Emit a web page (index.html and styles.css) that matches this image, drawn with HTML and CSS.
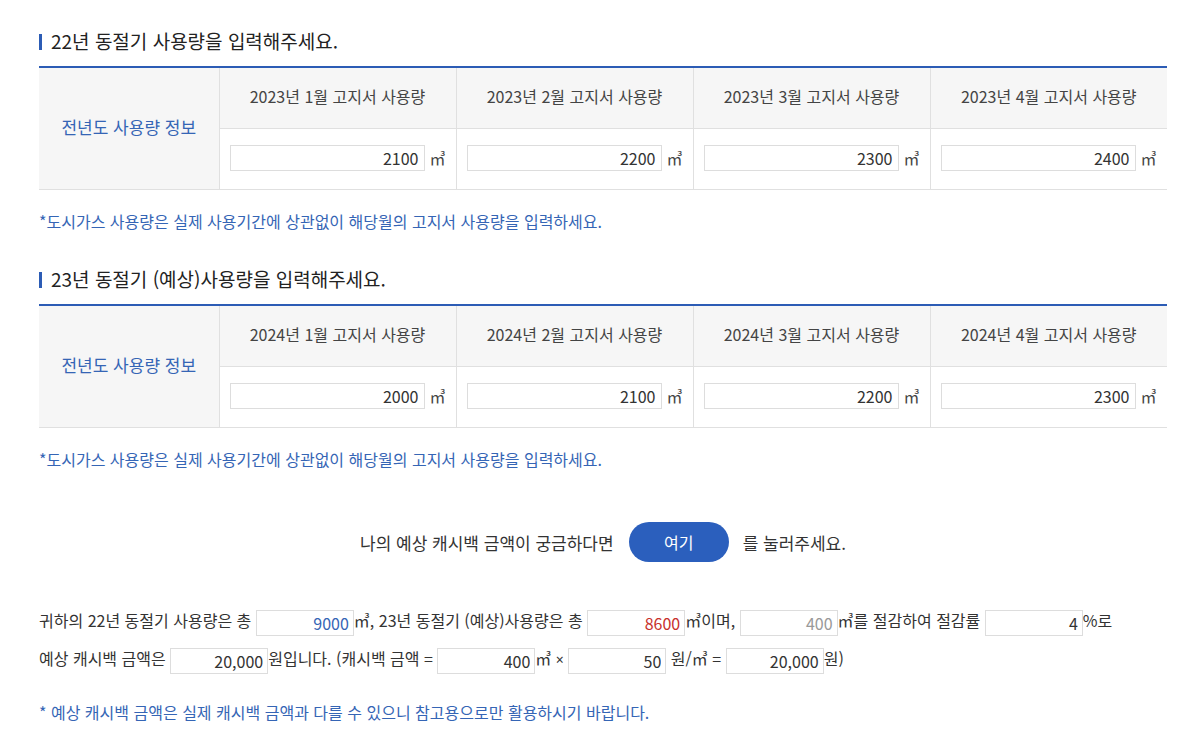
FILE: index.html
```html
<!DOCTYPE html>
<html lang="ko">

<head>
    <meta charset="UTF-8">
    <title>동절기 캐시백 계산</title>
    <link rel="stylesheet" href="styles.css">
</head>

<body>
    <div class="wrap">
        <!-- 22년 동절기 -->
        <h3 class="sub-title">22년 동절기 사용량을 입력해주세요.</h3>
        <table class="usage-table">
            <colgroup>
                <col class="col-label">
                <col><col><col><col>
            </colgroup>
            <tr>
                <th rowspan="2" class="label">전년도 사용량 정보</th>
                <th>2023년 1월 고지서 사용량</th>
                <th>2023년 2월 고지서 사용량</th>
                <th>2023년 3월 고지서 사용량</th>
                <th>2023년 4월 고지서 사용량</th>
            </tr>
            <tr>
                <td><input class="amount" type="text" value="2100"><span class="unit">㎥</span></td>
                <td><input class="amount" type="text" value="2200"><span class="unit">㎥</span></td>
                <td><input class="amount" type="text" value="2300"><span class="unit">㎥</span></td>
                <td><input class="amount" type="text" value="2400"><span class="unit">㎥</span></td>
            </tr>
        </table>
        <p class="note">*도시가스 사용량은 실제 사용기간에 상관없이 해당월의 고지서 사용량을 입력하세요.</p>

        <!-- 23년 동절기 -->
        <h3 class="sub-title">23년 동절기 (예상)사용량을 입력해주세요.</h3>
        <table class="usage-table">
            <colgroup>
                <col class="col-label">
                <col><col><col><col>
            </colgroup>
            <tr>
                <th rowspan="2" class="label">전년도 사용량 정보</th>
                <th>2024년 1월 고지서 사용량</th>
                <th>2024년 2월 고지서 사용량</th>
                <th>2024년 3월 고지서 사용량</th>
                <th>2024년 4월 고지서 사용량</th>
            </tr>
            <tr>
                <td><input class="amount" type="text" value="2000"><span class="unit">㎥</span></td>
                <td><input class="amount" type="text" value="2100"><span class="unit">㎥</span></td>
                <td><input class="amount" type="text" value="2200"><span class="unit">㎥</span></td>
                <td><input class="amount" type="text" value="2300"><span class="unit">㎥</span></td>
            </tr>
        </table>
        <p class="note">*도시가스 사용량은 실제 사용기간에 상관없이 해당월의 고지서 사용량을 입력하세요.</p>

        <div class="calc-row">
            <span>나의 예상 캐시백 금액이 궁금하다면</span>
            <button class="calc-btn" type="button">여기</button>
            <span>를 눌러주세요.</span>
        </div>

        <p class="result">
            귀하의 22년 동절기 사용량은 총 <input class="res blue" type="text" value="9000" readonly>㎥, 23년 동절기 (예상)사용량은 총 <input class="res red" type="text" value="8600" readonly>㎥이며, <input class="res gray" type="text" value="400" readonly>㎥를 절감하여 절감률 <input class="res" type="text" value="4" readonly>%로<br>
            예상 캐시백 금액은 <input class="res" type="text" value="20,000" readonly>원입니다. (캐시백 금액 = <input class="res" type="text" value="400" readonly>㎥ <span class="times">×</span> <input class="res" type="text" value="50" readonly> 원/㎥ = <input class="res" type="text" value="20,000" readonly>원)
        </p>

        <p class="note note-last">* 예상 캐시백 금액은 실제 캐시백 금액과 다를 수 있으니 참고용으로만 활용하시기 바랍니다.</p>
    </div>
</body>

</html>
```

FILE: styles.css
```css
html,
body {
    margin: 0;
    padding: 0;
    background: #fff;
    font-family: 'Noto Sans CJK KR', 'Noto Sans', sans-serif;
    color: #333;
}

.wrap {
    width: 1128px;
    margin-left: 39px;
    padding-top: 28px;
}

.sub-title {
    margin: 0 0 12px;
    padding-left: 12px;
    position: relative;
    font-size: 19px;
    font-weight: 400;
    line-height: 26px;
    color: #222;
}

.sub-title::before {
    content: '';
    position: absolute;
    left: 0;
    top: 6px;
    width: 3px;
    height: 16px;
    background: #2c5cb5;
}

.usage-table {
    width: 100%;
    border-collapse: collapse;
    table-layout: fixed;
    border-top: 2px solid #2c5cb5;
    border-bottom: 1px solid #e0e0e0;
}

.col-label {
    width: 180px;
}

.usage-table th,
.usage-table td {
    border-left: 1px solid #e0e0e0;
    padding: 0 0 4px;
    height: 56px;
    font-size: 16px;
    font-weight: 400;
}

.usage-table th {
    background: #f6f6f6;
    color: #444;
    border-bottom: 1px solid #e0e0e0;
}

.usage-table th.label {
    border-left: none;
    font-size: 17px;
    color: #3565b5;
}

.usage-table td {
    padding-left: 10px;
    white-space: nowrap;
}

.amount {
    width: 195px;
    height: 26px;
    box-sizing: border-box;
    border: 1px solid #ddd;
    padding: 0 5px;
    text-align: right;
    font-family: inherit;
    font-size: 16px;
    color: #333;
    vertical-align: middle;
}

.unit {
    margin-left: 5px;
    vertical-align: middle;
    color: #444;
}

.note {
    margin: 20px 0 34px;
    font-size: 16px;
    line-height: 22px;
    color: #3565b5;
}

.calc-row {
    display: flex;
    justify-content: center;
    align-items: center;
    gap: 12px;
    margin-top: 52px;
    font-size: 17px;
    color: #333;
}

.calc-btn {
    width: 100px;
    height: 40px;
    border: none;
    border-radius: 20px;
    background: #2b5fbd;
    color: #fff;
    font-family: inherit;
    font-size: 16px;
    margin: 0 2px 0 3px;
    cursor: pointer;
}

.result {
    margin: 39px 0 0;
    font-size: 16px;
    line-height: 38px;
    color: #333;
}

.res {
    width: 98px;
    height: 26px;
    box-sizing: border-box;
    border: 1px solid #ddd;
    padding: 0 4px;
    text-align: right;
    font-family: inherit;
    font-size: 16px;
    color: #333;
    vertical-align: middle;
}

.res.blue {
    color: #3565b5;
}

.res.red {
    color: #c8302c;
}

.res.gray {
    color: #999;
}

.times {
    font-family: 'Noto Sans', sans-serif;
    font-size: 14px;
}

.note-last {
    margin-top: 22px;
}
```
